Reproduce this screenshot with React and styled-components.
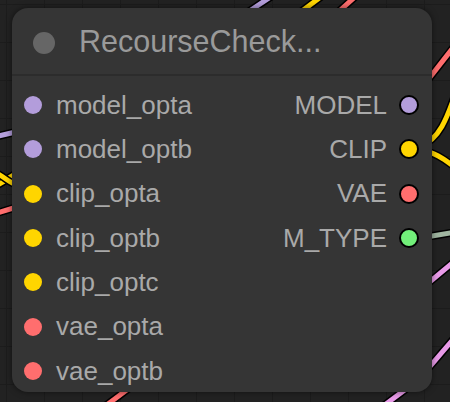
import React from "react"
import styled, { createGlobalStyle } from "styled-components"

const COLORS = {
  MODEL: "#b39ddb",
  CLIP: "#ffd500",
  VAE: "#ff6e6e",
  M_TYPE: "#72f07a",
}

const inputs = [
  { name: "model_opta", type: "MODEL" },
  { name: "model_optb", type: "MODEL" },
  { name: "clip_opta", type: "CLIP" },
  { name: "clip_optb", type: "CLIP" },
  { name: "clip_optc", type: "CLIP" },
  { name: "vae_opta", type: "VAE" },
  { name: "vae_optb", type: "VAE" },
]

const outputs = ["MODEL", "CLIP", "VAE", "M_TYPE"]

// wires on the canvas behind the node
const wires = [
  { d: "M245 14 L272 -4", c: COLORS.MODEL },
  { d: "M298 14 L322 -4", c: COLORS.CLIP },
  { d: "M336 14 L356 -4", c: COLORS.VAE },
  { d: "M420 90 L456 44", c: COLORS.VAE },
  { d: "M420 146 C440 140 448 115 456 92", c: COLORS.CLIP },
  { d: "M420 150 C435 152 445 160 456 168", c: COLORS.CLIP },
  { d: "M420 238 L456 232", c: "#9fb5a0" },
  { d: "M420 290 L456 260", c: "#e89ae8" },
  { d: "M420 378 L456 336", c: "#e89ae8" },
  { d: "M378 410 L410 386", c: "#e89ae8" },
  { d: "M100 410 L132 386", c: COLORS.VAE },
  { d: "M-6 137 L20 131", c: COLORS.MODEL },
  { d: "M-6 214 L20 206", c: COLORS.VAE },
  { d: "M-6 186 C4 184 8 176 20 172", c: COLORS.CLIP },
  { d: "M-6 172 C4 176 10 184 20 186", c: COLORS.CLIP },
]

const GlobalStyle = createGlobalStyle`
  html, body {
    margin: 0;
    padding: 0;
    background: #222;
  }
`

const Canvas = styled.div`
  position: relative;
  width: 450px;
  height: 402px;
  overflow: hidden;
  background-color: #222;
  background-image:
    linear-gradient(#1c1c1c 1px, transparent 1px),
    linear-gradient(90deg, #1c1c1c 1px, transparent 1px);
  background-size: 38px 38px;
  background-position: 6px 4px;
  font-family: "Liberation Sans", Arial, sans-serif;
`

const Wires = styled.svg`
  position: absolute;
  inset: 0;
`

const Node = styled.div`
  position: absolute;
  left: 12px;
  top: 8px;
  width: 420px;
  height: 384px;
  background: #353535;
  border-radius: 16px;
  box-shadow: 0 0 6px rgba(0, 0, 0, 0.5);
  display: flex;
  flex-direction: column;
`

const TitleBar = styled.div`
  flex-shrink: 0;
  height: 68px;
  box-sizing: border-box;
  padding-top: 3px;
  border-bottom: 2px solid #2c2c2c;
  display: flex;
  align-items: center;
  padding-left: 21px;
  gap: 24px;
`

const TitleDot = styled.span`
  width: 22px;
  height: 22px;
  border-radius: 50%;
  background: #666;
`

const Title = styled.span`
  font-size: 30.5px;
  color: #9a9a9a;
  line-height: 1;
  padding-bottom: 2px;
`

const Body = styled.div`
  flex-shrink: 0;
  display: flex;
  justify-content: space-between;
  padding-top: 7px;
`

const Column = styled.div`
  display: flex;
  flex-direction: column;
`

const Slot = styled.div`
  height: 44.33px;
  display: flex;
  align-items: center;
  justify-content: ${(p) => (p.$out ? "flex-end" : "flex-start")};
  gap: ${(p) => (p.$out ? "12px" : "14px")};
  padding: ${(p) => (p.$out ? "0 13px 0 0" : "0 0 0 12px")};
  font-size: 26px;
  color: #a9a9a9;
`

const Dot = styled.span`
  width: ${(p) => (p.$out ? "16px" : "18px")};
  height: ${(p) => (p.$out ? "16px" : "18px")};
  border-radius: 50%;
  background: ${(p) => p.$color};
  border: ${(p) => (p.$out ? "2px solid #000" : "none")};
  flex-shrink: 0;
`

const App = () => (
  <Canvas>
    <GlobalStyle />
    <Wires width="450" height="402" viewBox="0 0 450 402">
      {wires.map((w, i) => (
        <g key={i} fill="none" strokeLinecap="round">
          <path d={w.d} stroke="#000" strokeWidth="8" />
          <path d={w.d} stroke={w.c} strokeWidth="5" />
        </g>
      ))}
    </Wires>
    <Node>
      <TitleBar>
        <TitleDot />
        <Title>RecourseCheck...</Title>
      </TitleBar>
      <Body>
        <Column>
          {inputs.map((s) => (
            <Slot key={s.name}>
              <Dot $color={COLORS[s.type]} />
              {s.name}
            </Slot>
          ))}
        </Column>
        <Column>
          {outputs.map((o) => (
            <Slot key={o} $out>
              {o}
              <Dot $out $color={COLORS[o]} />
            </Slot>
          ))}
        </Column>
      </Body>
    </Node>
  </Canvas>
)

export default App
